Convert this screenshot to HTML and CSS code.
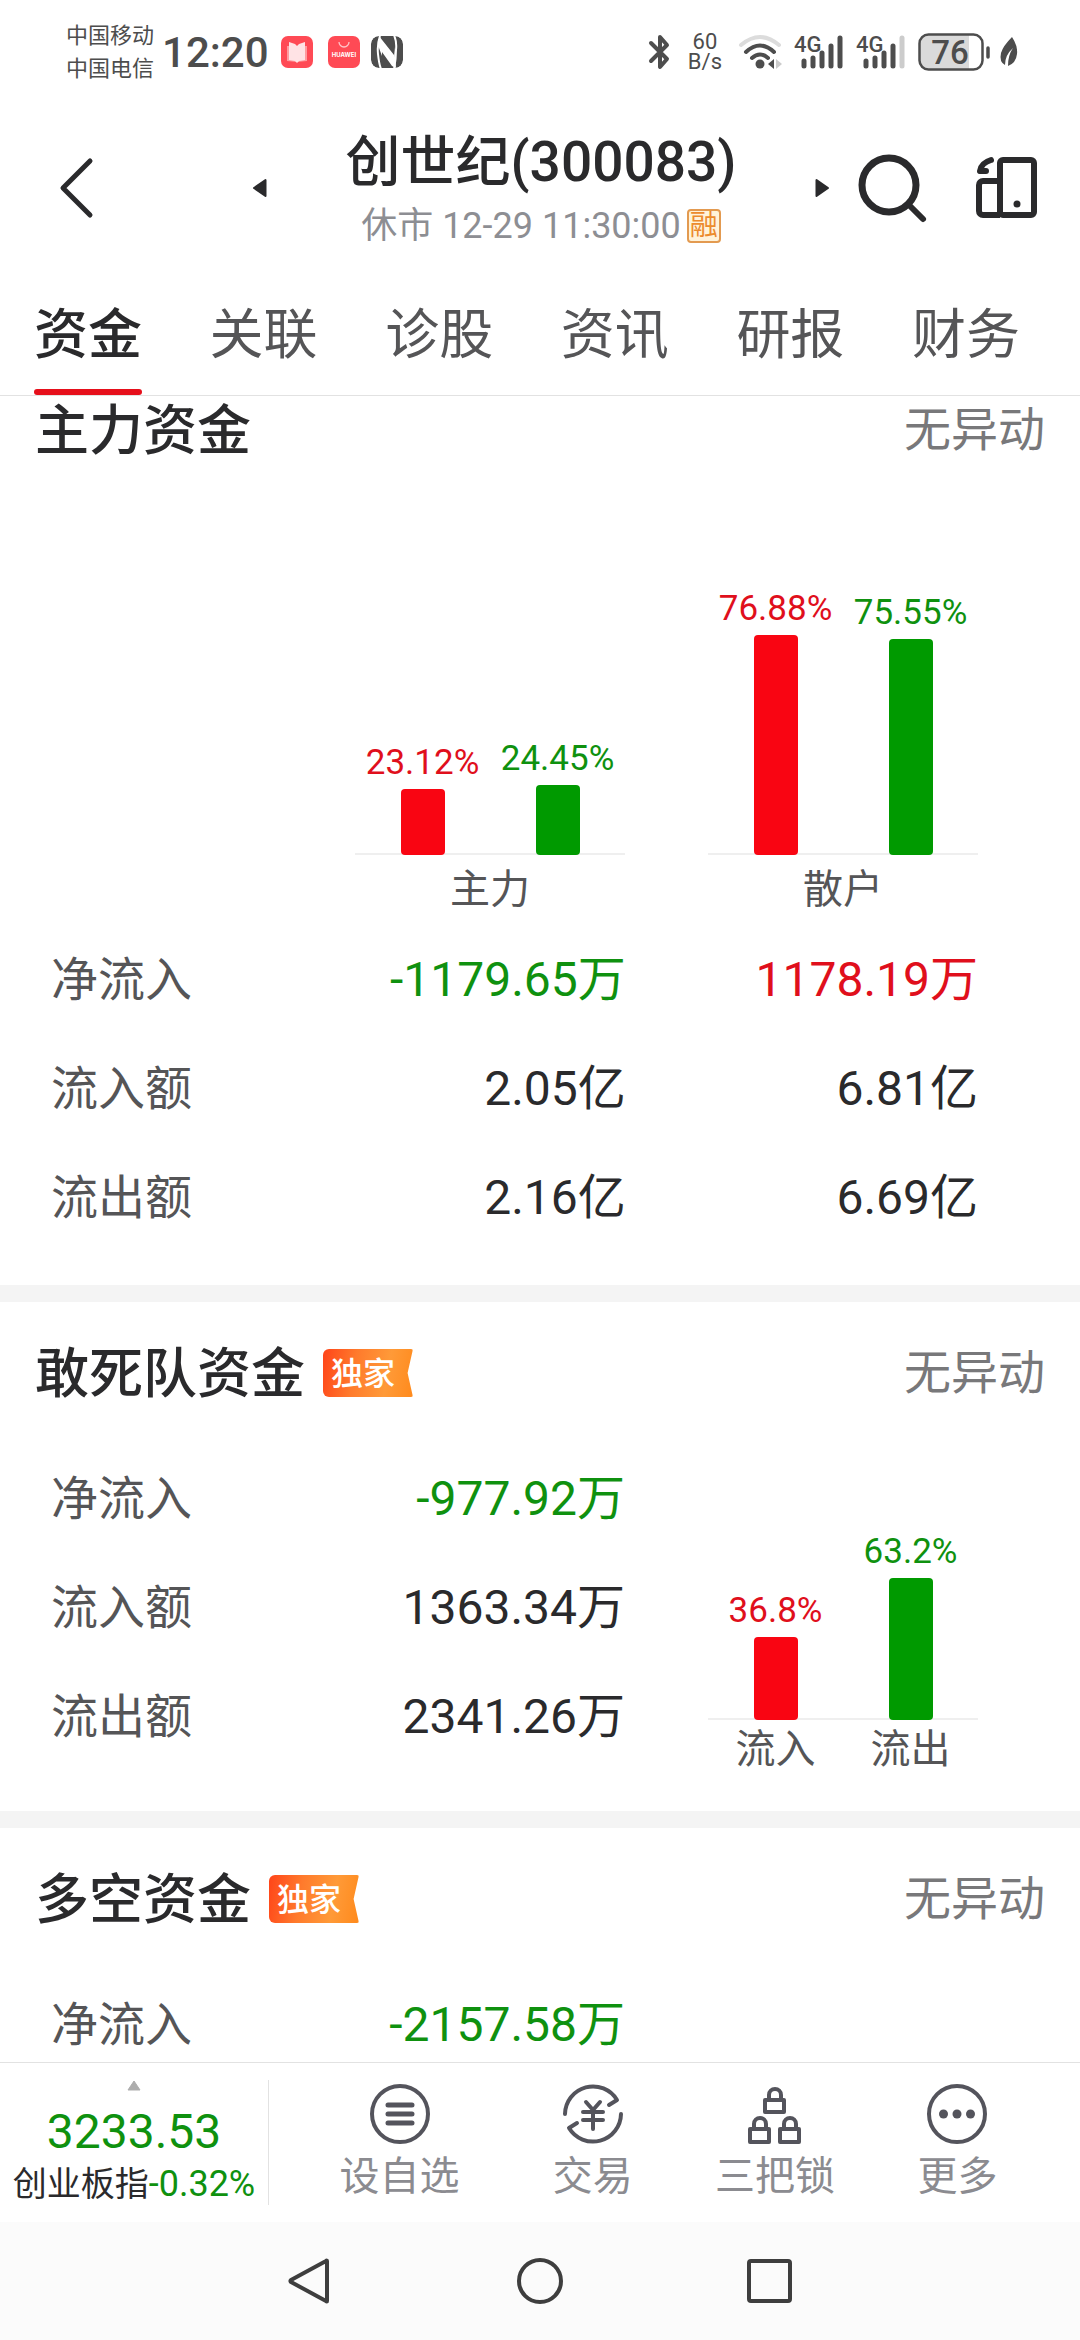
FILE: index.html
```html
<!DOCTYPE html>
<html lang="zh-CN">
<head>
<meta charset="utf-8">
<meta name="viewport" content="width=device-width, initial-scale=1">
<title>创世纪(300083) 资金</title>
<link rel="stylesheet" href="styles.css">
</head>
<body>
<div class="page">
  <div class="status">
    <div class="carriers"><span>中国移动</span><span>中国电信</span></div>
    <time class="clock">12:20</time>
    <div class="notices">
      <svg width="32" height="32" viewBox="0 0 32 32" aria-hidden="true"><rect width="32" height="32" rx="7" fill="#ff4a55"/><path d="M6 10h20v15l-10 1-10-1z" fill="#ff9b9f"/><path d="M8 6l6 2 2 2 2-2 6-2v18l-6 1-2 2-2-2-6-1z" fill="#ffe3e5"/></svg>
      <svg width="32" height="32" viewBox="0 0 32 32" aria-hidden="true"><rect width="32" height="32" rx="7" fill="#ff4a55"/><path d="M11 6a5 5 0 0 0 10 0" fill="none" stroke="#ffc4c8" stroke-width="1.3"/><text x="16" y="21" text-anchor="middle" class="store-name">HUAWEI</text></svg>
      <svg class="nfc" width="32" height="32" viewBox="0 0 32 32" aria-hidden="true"><rect width="32" height="32" rx="8" fill="#4d4d4d"/><path d="M9 0Q6 8 7 18 8 28 10 33M23 -1Q26 6 25 14 25 24 23 33" fill="none" stroke="#fff" stroke-width="2"/><path d="M8 0l15 19V11l2 21-14-21v9L8 12zM11 11l14 21-4-2-10-14z" fill="#fff"/></svg>
    </div>
    <div class="signals">
      <svg width="24" height="36" viewBox="0 0 24 36" aria-hidden="true"><path d="M3 9l16 16-7 8V3l7 8L3 27" fill="none" stroke="#4d4d4d" stroke-width="4" stroke-linejoin="round" stroke-linecap="round"/></svg>
      <div class="speed"><span>60</span><span>B/s</span></div>
      <svg width="46" height="36" viewBox="0 0 46 36" aria-hidden="true"><g fill="none" stroke-linecap="round" stroke-width="4"><path d="M3 11Q22-5 41 11" stroke="#dcdcdc"/><path d="M8 18Q22 5 36 18M14 24q8-7 16 0" stroke="#4d4d4d"/></g><circle cx="22" cy="30" r="4.500" fill="#4d4d4d"/><path d="M36 25v10l-6-5z" fill="#4d4d4d"/><path d="M38 25v10l6-5z" fill="#ccc"/></svg>
      <svg width="52" height="36" viewBox="0 0 52 36" aria-hidden="true"><text x="0" y="18" class="net">4G</text><g stroke="#4d4d4d" stroke-width="5" stroke-linecap="round"><path d="M10 27v5M19 24v8M28 19v13M37 12v20M46 4v28"/></g></svg>
      <svg width="52" height="36" viewBox="0 0 52 36" aria-hidden="true"><text x="0" y="18" class="net">4G</text><g stroke="#4d4d4d" stroke-width="5" stroke-linecap="round"><path d="M10 27v5M19 24v8M28 19v13M37 12v20"/><path d="M46 4v28" stroke="#ccc"/></g></svg>
      <svg width="72" height="38" viewBox="0 0 72 38" aria-hidden="true"><path d="M10 2h41v34H10a8 8 0 0 1-8-8V10a8 8 0 0 1 8-8z" fill="#dadada"/><rect x="1.500" y="1.500" width="63" height="35" rx="9" fill="none" stroke="#4d4d4d" stroke-width="2.500"/><path d="M70 15v9" stroke="#4d4d4d" stroke-width="3.500" stroke-linecap="round"/><text x="32" y="31" text-anchor="middle" class="charge">76</text></svg>
      <svg width="18" height="30" viewBox="0 0 18 30" aria-hidden="true"><path d="M12 0q6 9 5 17-1 9-9 12 0-11 5-18Q5 18 5 28-1 25 1 16 3 9 12 0z" fill="#4d4d4d"/></svg>
    </div>
  </div>

  <header class="header">
    <button class="icon-btn back" aria-label="返回"><svg width="34" height="62" viewBox="0 0 34 62"><path d="M31 4 4 31l27 27" fill="none" stroke="#2a2a2c" stroke-width="5" stroke-linecap="round" stroke-linejoin="round"/></svg></button>
    <div class="stock">
      <button class="icon-btn" aria-label="上一只"><svg width="14" height="18" viewBox="0 0 14 18"><path d="M12.500 1v16L1 9z" fill="#2a2a2c" stroke="#2a2a2c" stroke-width="2" stroke-linejoin="round"/></svg></button>
      <div class="stock-text">
        <h1>创世纪(300083)</h1>
        <p><span>休市 12-29 11:30:00</span><span class="margin-tag">融</span></p>
      </div>
      <button class="icon-btn" aria-label="下一只"><svg width="14" height="18" viewBox="0 0 14 18"><path d="M1.500 1v16L13 9z" fill="#2a2a2c" stroke="#2a2a2c" stroke-width="2" stroke-linejoin="round"/></svg></button>
    </div>
    <div class="tools">
      <button class="icon-btn" aria-label="搜索"><svg width="68" height="68" viewBox="0 0 68 68"><circle cx="31" cy="31" r="27" fill="none" stroke="#2a2a2c" stroke-width="7"/><path d="M51 51l14 14" stroke="#2a2a2c" stroke-width="6" stroke-linecap="round"/></svg></button>
      <button class="icon-btn" aria-label="多屏"><svg width="62" height="62" viewBox="0 0 62 62"><g fill="none" stroke="#2a2a2c" stroke-width="6"><rect x="24" y="3" width="34" height="55" rx="3"/><path d="M24 24H7a4 4 0 0 0-4 4v26a4 4 0 0 0 4 4h17"/></g><circle cx="41" cy="47" r="3.500" fill="#2a2a2c"/><path d="M15 3Q5 6 4 14h6" fill="none" stroke="#2a2a2c" stroke-width="6" stroke-linecap="round" stroke-linejoin="round"/></svg></button>
    </div>
  </header>

  <nav class="tabs">
    <a href="#funds" class="active" aria-current="page">资金</a>
    <a href="#related">关联</a>
    <a href="#diagnosis">诊股</a>
    <a href="#news">资讯</a>
    <a href="#reports">研报</a>
    <a href="#finance">财务</a>
  </nav>

  <main class="content" id="funds">
    <section class="card card-main">
      <div class="card-head"><h2>主力资金</h2><span class="state">无异动</span></div>
      <div class="charts">
        <figure class="chart chart-left">
          <div class="plot">
            <div class="col up"><span>23.12%</span><i style="height:23.12%"></i></div>
            <div class="col down"><span>24.45%</span><i style="height:24.45%"></i></div>
          </div>
          <figcaption><span>主力</span></figcaption>
        </figure>
        <figure class="chart chart-right">
          <div class="plot">
            <div class="col up"><span>76.88%</span><i style="height:76.88%"></i></div>
            <div class="col down"><span>75.55%</span><i style="height:75.55%"></i></div>
          </div>
          <figcaption><span>散户</span></figcaption>
        </figure>
      </div>
      <div class="sheet">
        <table class="flows wide">
          <tr><th scope="row">净流入</th><td class="down">-1179.65万</td><td class="up">1178.19万</td></tr>
          <tr><th scope="row">流入额</th><td>2.05亿</td><td>6.81亿</td></tr>
          <tr><th scope="row">流出额</th><td>2.16亿</td><td>6.69亿</td></tr>
        </table>
      </div>
    </section>

    <section class="card">
      <div class="card-head"><h2>敢死队资金</h2><span class="ribbon">独家</span><span class="state">无异动</span></div>
      <div class="split">
        <table class="flows">
          <tr><th scope="row">净流入</th><td class="down">-977.92万</td></tr>
          <tr><th scope="row">流入额</th><td>1363.34万</td></tr>
          <tr><th scope="row">流出额</th><td>2341.26万</td></tr>
        </table>
        <figure class="chart chart-side">
          <div class="plot">
            <div class="col up"><span>36.8%</span><i style="height:36.8%"></i></div>
            <div class="col down"><span>63.2%</span><i style="height:63.2%"></i></div>
          </div>
          <figcaption><span>流入</span><span>流出</span></figcaption>
        </figure>
      </div>
    </section>

    <section class="card card-last">
      <div class="card-head"><h2>多空资金</h2><span class="ribbon">独家</span><span class="state">无异动</span></div>
      <div class="split">
        <table class="flows">
          <tr><th scope="row">净流入</th><td class="down">-2157.58万</td></tr>
        </table>
      </div>
    </section>
  </main>

  <footer class="bottom">
    <button class="index">
      <svg width="14" height="11" viewBox="0 0 14 11" aria-hidden="true"><path d="M7 1l6 9H1z" fill="#adadad" stroke="#adadad" stroke-linejoin="round"/></svg>
      <strong>3233.53</strong>
      <span class="index-name">创业板指<em>-0.32%</em></span>
    </button>
    <div class="actions">
      <button><svg width="60" height="60" viewBox="0 0 60 60" fill="none" stroke="#54545c" stroke-width="4" stroke-linecap="round"><circle cx="30" cy="30" r="28"/><path d="M18 21h24M18 30h24M18 39h24" stroke-width="5"/></svg>设自选</button>
      <button><svg width="60" height="60" viewBox="0 0 60 60" fill="none" stroke="#54545c" stroke-width="4" stroke-linecap="round" stroke-linejoin="round"><path d="M2 30A28 28 0 0 1 54 16l-8 5M58 30A28 28 0 0 1 6 44l8-5"/><path d="M23 18l7 8 7-8M20 28h20M20 36h20M30 27v18"/></svg>交易</button>
      <button><svg width="60" height="60" viewBox="0 0 60 60" fill="none" stroke="#54545c" stroke-width="4" stroke-linejoin="round"><path d="M20 16h19v12H20zM24 16v-5a6 6 0 0 1 12 0v5M5 45h19v13H5zM9 45v-5a6 6 0 0 1 12 0v5M35 45h19v13H35zM39 45v-5a6 6 0 0 1 12 0v5"/></svg>三把锁</button>
      <button><svg width="60" height="60" viewBox="0 0 60 60"><circle cx="30" cy="30" r="28" fill="none" stroke="#54545c" stroke-width="4"/><g fill="#54545c"><circle cx="16.500" cy="30" r="4.500"/><circle cx="30" cy="30" r="4.500"/><circle cx="43.500" cy="30" r="4.500"/></g></svg>更多</button>
    </div>
  </footer>

  <nav class="system">
    <button class="icon-btn" aria-label="返回"><svg width="46" height="46" viewBox="0 0 46 46"><path d="M40 3v40q0 1-1 0L4 24q-1-1 0-2L39 3q1-1 1 0z" fill="none" stroke="#3e3e3e" stroke-width="4" stroke-linejoin="round"/></svg></button>
    <button class="icon-btn" aria-label="主屏幕"><svg width="46" height="46" viewBox="0 0 46 46"><circle cx="23" cy="23" r="21" fill="none" stroke="#3e3e3e" stroke-width="4"/></svg></button>
    <button class="icon-btn" aria-label="最近任务"><svg width="46" height="46" viewBox="0 0 46 46"><rect x="2" y="3" width="41" height="40" rx="2" fill="none" stroke="#3e3e3e" stroke-width="4"/></svg></button>
  </nav>
</div>
</body>
</html>
```
FILE: styles.css
```css
:root {
  --ink: #2a2a2c;
  --soft: #555557;
  --muted: #78787a;
  --red: #e00f1c;
  --green: #0f910f;
}

* { box-sizing: border-box; }

body {
  margin: 0;
  background: #fff;
  color: var(--ink);
  font-family: Roboto, "Noto Sans CJK SC", sans-serif;
}

h1, h2, p, figure { margin: 0; }
svg { display: block; flex: none; overflow: visible; }

button {
  padding: 0;
  border: 0;
  background: none;
  color: inherit;
  font: inherit;
}

/* App shell: fixed bars, the cards scroll between them */
.page {
  display: flex;
  flex-direction: column;
  height: 100vh;
}

.status, .header, .tabs, .bottom, .system { flex: none; }

/* Phone status bar */
.status {
  display: flex;
  align-items: center;
  height: 104px;
  padding: 0 62px 0 66px;
  color: #4d4d4d;
}

.carriers, .speed {
  display: flex;
  flex-direction: column;
  font-size: 22px;
  line-height: 33px;
}

.clock {
  margin-left: 8px;
  font-size: 42px;
  font-weight: 500;
}

.notices { display: flex; gap: 15px; margin-left: 12px; }
.nfc { margin-left: -4px; border-radius: 8px; overflow: hidden; }
.store-name { font: 700 6px Inter, sans-serif; fill: #fff; }

.signals {
  display: flex;
  align-items: center;
  gap: 10px;
  margin-left: auto;
}

.speed {
  margin: 0 6px;
  line-height: 20px;
  text-align: center;
}

.net { font: 500 22px Roboto, sans-serif; fill: #4d4d4d; }
.charge { font: 500 33px Roboto, sans-serif; fill: #4d4d4d; }

/* Stock header */
.header {
  display: grid;
  grid-template-columns: 1fr auto 1fr;
  align-items: center;
  height: 168px;
  padding: 0 42px 0 59px;
}

.back { justify-self: start; }

.stock {
  display: flex;
  align-items: center;
  justify-content: space-between;
  width: 576px;
  margin-right: 15px;
}

.stock-text { padding-top: 4px; text-align: center; }

.stock-text h1 {
  font-size: 55px;
  font-weight: 500;
  line-height: 72px;
}

.stock-text p {
  display: flex;
  align-items: center;
  justify-content: center;
  gap: 6px;
  color: #8d8e93;
  font-size: 36px;
  line-height: 56px;
}

.margin-tag {
  width: 34px;
  height: 34px;
  border: 2px solid #e39a50;
  border-radius: 4px;
  background: #fff3da;
  color: #ec8b2d;
  font-size: 28px;
  line-height: 29px;
  text-align: center;
}

.tools {
  display: flex;
  align-items: center;
  justify-content: flex-end;
  gap: 50px;
}

/* Section tabs */
.tabs {
  display: flex;
  justify-content: space-between;
  padding: 0 60px 0 34px;
  border-bottom: 1px solid #e2e2e2;
}

.tabs a {
  position: relative;
  padding-top: 5px;
  color: var(--soft);
  font-size: 54px;
  line-height: 118px;
  text-decoration: none;
}

.tabs .active { color: var(--ink); font-weight: 500; }

.tabs .active::after {
  content: "";
  position: absolute;
  right: 0;
  bottom: 0;
  left: 0;
  height: 6px;
  border-radius: 3px;
  background: #e60f1b;
}

/* Cards */
.content {
  flex: 1;
  min-height: 0;
  overflow-y: auto;
  scrollbar-width: none;
}

.card {
  padding: 37px 0 41px;
  border-bottom: 17px solid #f4f4f4;
}

.card-main { padding: 0 0 34px; }
.card-last { padding-bottom: 0; border-bottom: 0; }

.card-head {
  display: flex;
  align-items: center;
  height: 68px;
  padding: 0 35px;
}

.card-head h2 {
  padding-top: 4px;
  font-size: 54px;
  font-weight: 500;
  line-height: 68px;
}

.state {
  margin-left: auto;
  color: var(--muted);
  font-size: 47px;
  line-height: 68px;
}

.ribbon {
  width: 90px;
  height: 48px;
  margin-left: 18px;
  padding-left: 8px;
  border-radius: 6px 2px 2px 6px;
  background: linear-gradient(100deg, #ff4419 0%, #ff7a2c 35%, #ff9a38 70%, #ff8a1c 100%);
  clip-path: polygon(0 0, 100% 0, 94% 50%, 100% 100%, 0 100%);
  color: #fff;
  font-size: 32px;
  font-weight: 500;
  line-height: 50px;
}

.sheet { padding: 0 102px 0 51px; }

.charts {
  display: grid;
  grid-template-columns: 304fr 270fr 83fr 270fr;
  padding: 105px 102px 12px 51px;
}

.chart-left { grid-column: 2; }
.chart-right { grid-column: 4; }

.split {
  display: grid;
  grid-template-columns: 574fr 83fr 270fr;
  align-items: start;
  padding: 36px 102px 0 51px;
}

.chart-side { grid-column: 3; margin-top: 52px; }

.plot {
  display: flex;
  height: 286px;
  box-shadow: inset 0 -2px #efefef;
}

.chart-side .plot { height: 225px; }

.col {
  display: flex;
  flex: 1;
  flex-direction: column;
  align-items: center;
  justify-content: flex-end;
  font-size: 35px;
  line-height: 40px;
}

.col span { margin-bottom: 6px; }
.col i { width: 44px; border-radius: 4px; }
.up { color: var(--red); }
.down { color: var(--green); }
.up i { background: #f90512; }
.down i { background: #009a00; }

figcaption {
  display: flex;
  margin-top: 13px;
  color: var(--soft);
  font-size: 40px;
  line-height: 44px;
  text-align: center;
}

.chart-side figcaption { margin-top: 8px; margin-bottom: -2px; }
figcaption span { flex: 1; }

.flows {
  width: 100%;
  border-collapse: collapse;
  table-layout: fixed;
  font-size: 48px;
}

.flows th {
  width: 53%;
  color: var(--soft);
  font-size: 47px;
  font-weight: 400;
  text-align: left;
}

.flows.wide th { width: 33%; }
.flows.wide td:last-child { width: 38%; }

.flows th, .flows td {
  height: 109px;
  padding: 2px 0 0;
  line-height: 60px;
}

.flows td { text-align: right; white-space: nowrap; }

/* Bottom action bar */
.bottom {
  display: flex;
  height: 160px;
  border-top: 1px solid #e2e2e2;
  background: #fff;
}

.index {
  display: flex;
  flex-direction: column;
  align-items: center;
  width: 269px;
  margin: 17px 0;
  border-right: 1px solid #e2e2e2;
  white-space: nowrap;
}

.index strong {
  margin-top: 13px;
  color: var(--green);
  font-size: 48px;
  font-weight: 400;
  line-height: 56px;
}

.index-name { font-size: 34px; line-height: 48px; }
.index em { color: var(--green); font-size: 36px; font-style: normal; }

.actions {
  display: grid;
  flex: 1;
  grid-template-columns: 9fr 9fr 8fr 9fr;
  padding: 21px 26px 0 34px;
}

.actions button {
  display: flex;
  flex-direction: column;
  align-items: center;
  gap: 8px;
  color: #8b8b90;
  font-size: 40px;
  line-height: 50px;
}

/* System navigation */
.system {
  display: flex;
  align-items: center;
  justify-content: center;
  gap: 184px;
  height: 118px;
  background: #fbfbfb;
}
```
